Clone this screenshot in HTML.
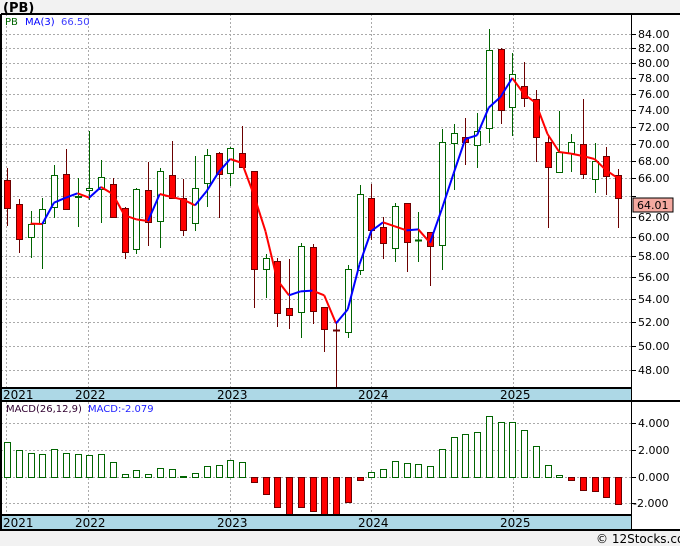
<!DOCTYPE html>
<html><head><meta charset="utf-8"><style>
body{margin:0;background:#f2f2f2;width:680px;height:546px;overflow:hidden;font-family:"Liberation Sans","DejaVu Sans",sans-serif}
svg{position:absolute;left:0;top:0}
</style></head><body>
<svg id="s" width="680" height="546" xmlns="http://www.w3.org/2000/svg" font-family="'DejaVu Sans','Liberation Sans',sans-serif">
<rect x="0" y="0" width="680" height="546" fill="#f2f2f2"/>
<rect x="1" y="14" width="679" height="516" fill="#fff"/>
<text x="3" y="12" font-size="13" font-weight="bold" fill="#000">(PB)</text>
<g id="grid"></g>
<rect x="1" y="388" width="630" height="13" fill="#add8e6"/>
<rect x="1" y="515" width="630" height="15" fill="#add8e6"/>
<g id="chart"></g>
<g stroke="#000" stroke-width="2" fill="none">
<line x1="1" y1="14" x2="680" y2="14"/>
<line x1="1" y1="14" x2="1" y2="531"/>
<line x1="1" y1="388" x2="631" y2="388"/>
<line x1="1" y1="401" x2="680" y2="401"/>
<line x1="1" y1="515" x2="631" y2="515"/>
<line x1="1" y1="530" x2="680" y2="530"/>
</g>
<line x1="631.5" y1="14" x2="631.5" y2="530" stroke="#000" stroke-width="1"/>
<g font-size="12" fill="#000">
<text x="3" y="399">2021</text><text x="75" y="399">2022</text><text x="217" y="399">2023</text><text x="358" y="399">2024</text><text x="500" y="399">2025</text>
<text x="3" y="527">2021</text><text x="75" y="527">2022</text><text x="217" y="527">2023</text><text x="358" y="527">2024</text><text x="500" y="527">2025</text>
</g>
<g font-size="11" fill="#000" id="ax">
<text x="638" y="38">84.00</text><text x="638" y="52">82.00</text><text x="638" y="67">80.00</text><text x="638" y="82">78.00</text><text x="638" y="98">76.00</text><text x="638" y="114">74.00</text><text x="638" y="131">72.00</text><text x="638" y="148">70.00</text><text x="638" y="165">68.00</text><text x="638" y="182">66.00</text><text x="638" y="221">62.00</text><text x="638" y="241">60.00</text><text x="638" y="260">58.00</text><text x="638" y="281">56.00</text><text x="638" y="303">54.00</text><text x="638" y="326">52.00</text><text x="638" y="350">50.00</text><text x="638" y="374">48.00</text>
<text x="638" y="427">4.000</text><text x="638" y="454">2.000</text><text x="638" y="481">0.000</text><text x="633" y="507">-2.000</text>
</g>
<rect x="633" y="198" width="40" height="14" fill="#f4a9a0" stroke="#000" stroke-width="1"/>
<text x="637" y="209" font-size="11" fill="#000">64.01</text>
<text x="5" y="25" font-size="10" fill="#006400">PB</text>
<text x="25" y="25" font-size="10" fill="#0000ff">MA(3)</text>
<text x="61" y="25" font-size="10" fill="#4040ff">66.50</text>
<text x="6" y="412" font-size="10" fill="#300030">MACD(26,12,9)</text>
<text x="88" y="412" font-size="10" fill="#2020ff">MACD:-2.079</text>
<text x="596" y="543" font-size="12" fill="#000">© 12Stocks.com</text>
</svg>
<script>
var NS="http://www.w3.org/2000/svg";
function el(p,t,a){var e=document.createElementNS(NS,t);for(var k in a)e.setAttribute(k,a[k]);p.appendChild(e);return e;}
var g=document.getElementById('grid'),c=document.getElementById('chart');
var hy=[34,48,63,78,94,110,127,144,161,178,196,217,237,256,277,299,322,346,370];
hy.forEach(function(y){el(g,'line',{x1:1,x2:631,y1:y+.5,y2:y+.5,stroke:'#aaa','stroke-dasharray':'2,2'});el(g,'line',{x1:631,x2:636,y1:y+.5,y2:y+.5,stroke:'#000'});});
[423,450,477,503].forEach(function(y){el(g,'line',{x1:1,x2:631,y1:y+.5,y2:y+.5,stroke:'#aaa','stroke-dasharray':'2,2'});el(g,'line',{x1:631,x2:636,y1:y+.5,y2:y+.5,stroke:'#000'});});
[6,88,230,371,513].forEach(function(x){el(g,'line',{x1:x+.5,x2:x+.5,y1:14,y2:530,stroke:'#aaa','stroke-dasharray':'2,2'});});
var d=[[180,208,168,226,1],[204,239,199,253,1],[224,237,211,258,0],[209,223,198,269,0],[175,207,165,218,0],[174,209,149,209,1],[196,197,178,227,0],[188,190,131,200,0],[177,189,160,223,0],[184,217,178,217,1],[208,252,207,259,1],[189,249,188,254,0],[190,222,162,246,1],[171,221,168,248,0],[175,198,141,198,1],[198,230,179,236,1],[188,223,156,231,0],[155,183,149,207,0],[153,174,152,218,1],[148,173,147,186,0],[153,167,126,167,1],[171,269,171,308,1],[258,269,254,298,0],[261,313,258,327,1],[308,315,259,329,1],[246,312,243,338,0],[247,311,244,324,1],[307,329,307,352,1],[330,330,323,387,1],[269,332,265,338,0],[194,270,185,275,0],[198,230,184,240,1],[227,243,217,259,1],[206,248,203,262,0],[203,242,203,272,1],[240,240,212,262,0],[232,246,232,286,1],[142,245,129,270,0],[133,143,124,190,0],[137,142,118,165,1],[131,145,113,168,0],[50,128,29,143,0],[49,110,48,124,1],[74,107,53,136,0],[86,98,62,107,1],[99,137,90,162,1],[142,167,135,228,1],[152,172,111,173,0],[142,153,134,172,0],[144,174,99,179,1],[161,179,143,193,0],[156,176,147,195,1],[175,198,169,228,1]];
var m=[442,450,453,454,449,453,454,455,454,462,474,470,474,468,469,476,473,466,465,460,462,482,494,507,515,507,511,515,514,502,480,472,469,461,463,464,466,449,437,434,432,416,422,422,430,446,465,475,480,490,491,497,504];
function X(i){return 7+i*11.75;}
d.forEach(function(k,i){var x=Math.round(X(i));var col=k[4]?'#6b0000':'#006400';
el(c,'line',{x1:x+.5,x2:x+.5,y1:k[2],y2:k[3],stroke:col,'stroke-width':1});
var h=Math.max(k[1]-k[0],1);
if(k[0]==k[1]) el(c,'line',{x1:x-3,x2:x+4,y1:k[0]+.5,y2:k[0]+.5,stroke:col,'stroke-width':2});
else el(c,'rect',{x:x-2.5,y:k[0]+.5,width:6,height:h,fill:k[4]?'#ff0000':'#fff',stroke:col,'stroke-width':1});});
var cl=d.map(function(k){return k[4]?k[1]:k[0];});var ma=[];
for(var i=2;i<cl.length;i++)ma[i]=(cl[i]+cl[i-1]+cl[i-2])/3;
for(var i=3;i<cl.length;i++){el(c,'line',{x1:X(i-1),y1:ma[i-1],x2:X(i),y2:ma[i],stroke:ma[i]<ma[i-1]?'#0000ff':'#ff0000','stroke-width':2});}
m.forEach(function(v,i){var x=Math.round(X(i));var neg=v>477;
el(c,'rect',{x:x-2.5,y:(neg?477:v)+.5,width:6,height:Math.max(Math.abs(v-477),1),fill:neg?'#ff0000':'#fff',stroke:neg?'#6b0000':'#006400','stroke-width':1});});
</script>
</body></html>
